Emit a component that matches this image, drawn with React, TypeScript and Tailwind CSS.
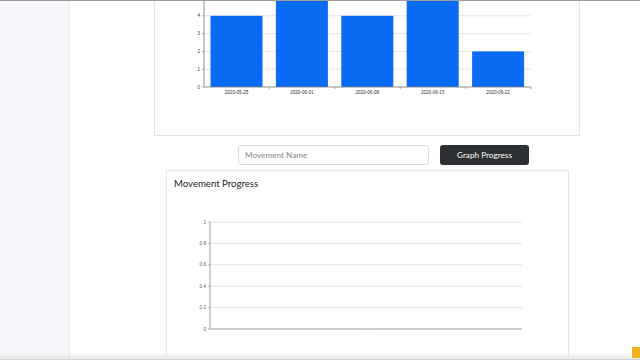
const weeks = [
    { label: "2020-05-25", value: 4 },
    { label: "2020-06-01", value: 5.2 },
    { label: "2020-06-08", value: 4 },
    { label: "2020-06-15", value: 5.2 },
    { label: "2020-06-22", value: 2 },
];

function WeeklyChart() {
    // card-local coordinates, card starts at x=154
    const axisX = 49;
    const base = 86;
    const step = 17.8;
    const band = 65.4;

    return (
        <svg width="424" height="134" className="block">
            {[1, 2, 3, 4].map((v) => (
                <line key={v} x1={axisX} x2={376} y1={base - v * step} y2={base - v * step} stroke="#e6e6e6" strokeWidth="1" />
            ))}
            {weeks.map((w, i) => {
                const x = axisX + 6.5 + i * band;
                const top = base - w.value * step;
                return (
                    <g key={w.label}>
                        <rect x={x} y={top} width={52} height={base - top} fill="#0a6cf5" />
                        <text x={x + 26} y={base + 7} fontSize="4.6" textAnchor="middle" fill="#333" fontFamily="Liberation Sans, sans-serif">
                            {w.label}
                        </text>
                        <line x1={axisX + (i + 1) * band} x2={axisX + (i + 1) * band} y1={base} y2={base + 2} stroke="#666" strokeWidth="0.6" />
                    </g>
                );
            })}
            <line x1={axisX} x2={axisX} y1={0} y2={base} stroke="#777" strokeWidth="0.8" />
            <line x1={axisX} x2={376} y1={base} y2={base} stroke="#777" strokeWidth="0.8" />
            {[0, 1, 2, 3, 4].map((v) => (
                <g key={v}>
                    <line x1={axisX - 2} x2={axisX} y1={base - v * step} y2={base - v * step} stroke="#777" strokeWidth="0.6" />
                    <text x={axisX - 4} y={base - v * step + 1.6} fontSize="4.6" textAnchor="end" fill="#333" fontFamily="Liberation Sans, sans-serif">
                        {v}
                    </text>
                </g>
            ))}
        </svg>
    );
}

function ProgressChart() {
    // card-local coordinates, card starts at x=166
    const axisX = 43;
    const top = 21;
    const base = 128;
    const ticks = [0, 0.2, 0.4, 0.6, 0.8, 1];

    return (
        <svg width="400" height="160" className="block">
            {ticks.slice(1).map((t) => {
                const y = base - t * (base - top);
                return <line key={t} x1={axisX} x2={355} y1={y} y2={y} stroke="#e3e3e3" strokeWidth="1" />;
            })}
            <line x1={axisX} x2={axisX} y1={top} y2={base} stroke="#888" strokeWidth="0.8" />
            <line x1={axisX} x2={355} y1={base} y2={base} stroke="#999" strokeWidth="1" />
            <line x1={201} x2={201} y1={base} y2={base + 1.5} stroke="#bbb" strokeWidth="0.8" />
            {ticks.map((t) => {
                const y = base - t * (base - top);
                return (
                    <g key={t}>
                        <line x1={axisX - 2} x2={axisX} y1={y} y2={y} stroke="#888" strokeWidth="0.6" />
                        <text x={axisX - 4} y={y + 1.6} fontSize="4.6" textAnchor="end" fill="#555" fontFamily="Liberation Sans, sans-serif">
                            {t}
                        </text>
                    </g>
                );
            })}
        </svg>
    );
}

export default function App() {
    return (
        <div className="relative w-[640px] h-[360px] overflow-hidden bg-white border-t border-[#9a9a9a] font-['Lato',sans-serif]">
            <div className="flex h-full">

                <div className="w-[70px] shrink-0 bg-[#f6f7fa] border-r border-[#e8e9ee]" />

                <div className="flex-1 flex flex-col">

                    <div className="ml-[84px] w-[426px] h-[135px] border border-t-0 border-[#e4e4e4]">
                        <WeeklyChart />
                    </div>

                    <div className="flex mt-[9px] ml-[168px] gap-[11px]">
                        <input
                            placeholder="Movement Name"
                            className="w-[191px] h-[20px] px-[6px] text-[8.2px] border border-[#dcdcdc] rounded-[3px] placeholder:text-[#888] outline-none"
                        />
                        <button className="w-[89px] h-[20px] rounded-[3px] bg-[#2c3034] text-white text-[8.2px]">
                            Graph Progress
                        </button>
                    </div>

                    <div className="ml-[96px] mt-[5px] w-[403px] flex-1 border border-[#e6e6e6] shadow-[0_0_2px_rgba(0,0,0,0.06)]">
                        <h3 className="pl-[7px] pt-[6px] text-[9.6px] text-[#222] leading-[14px]">
                            Movement Progress
                        </h3>
                        <div className="mt-[10px]">
                            <ProgressChart />
                        </div>
                    </div>

                </div>
            </div>

            <div className="absolute left-0 right-0 bottom-0 h-[8px] bg-gradient-to-b from-transparent to-[#e8e8e8] border-b border-[#d4d4d4]" />
            <div className="absolute right-0 bottom-[2px] w-[8px] h-[11px] bg-[#f2b01e] rounded-l-[1px]" />
        </div>
    );
}
